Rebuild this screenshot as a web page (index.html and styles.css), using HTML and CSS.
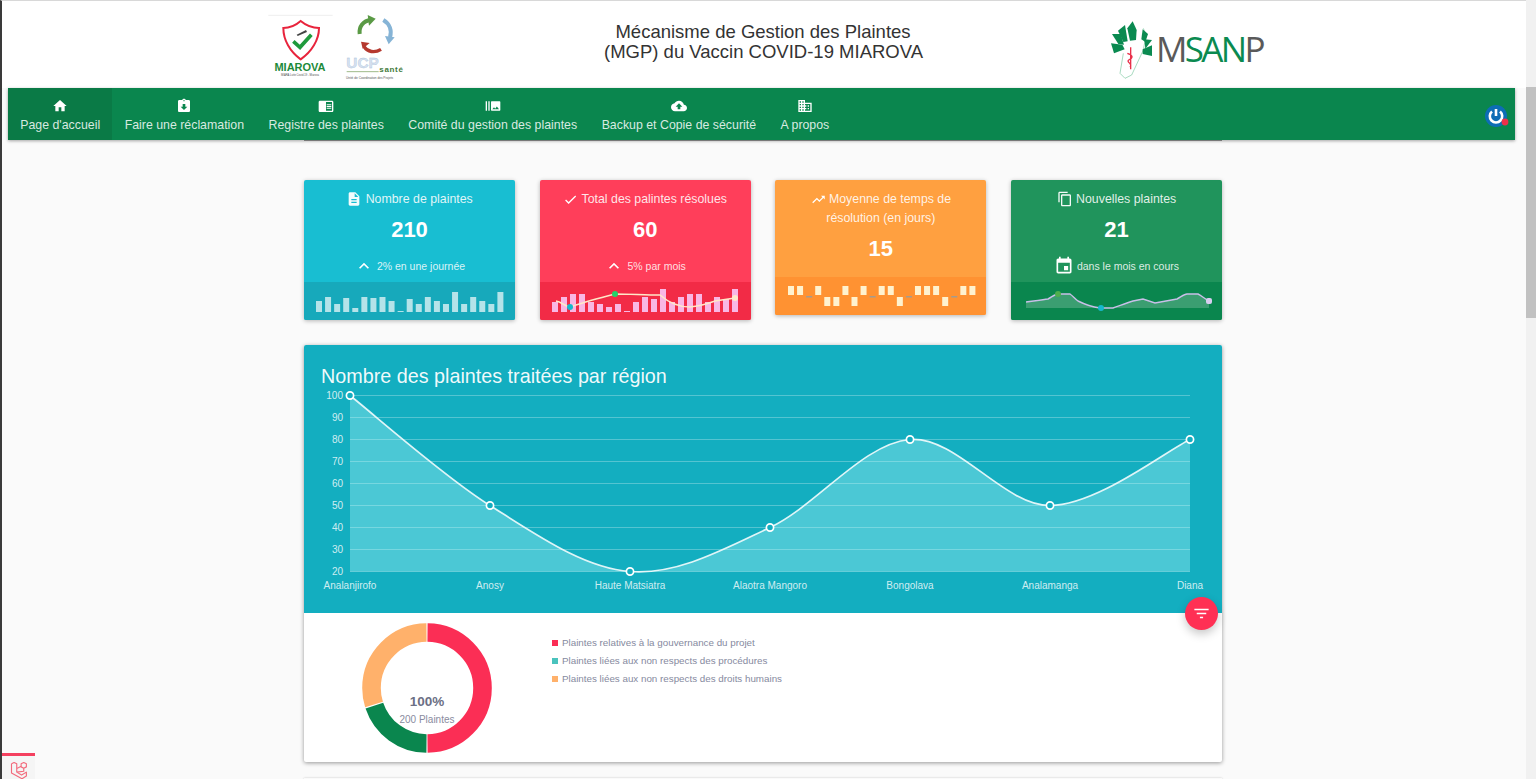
FILE: index.html
```html
<!DOCTYPE html>
<html lang="en">
<head>
    <meta charset="UTF-8">
    <meta name="viewport" content="width=device-width, initial-scale=1.0">
    <title>MGP MIAROVA</title>
    <link rel="stylesheet" href="styles.css">
</head>
<body>
    <div class="window-edge"></div>

    <header class="top-header">
        <svg class="logo-left" viewBox="0 0 540 261">
            <line x1="55" y1="46" x2="248" y2="46" stroke="#eee" stroke-width="3"/>
            <path d="M152 63C135 78 118 84 100 84C100 120 120 155 152 178C185 155 207 120 207 84C188 84 170 78 152 63Z" fill="#fff" stroke="#e8243c" stroke-width="6"/>
            <path d="M130 124l20 18 34-38" fill="none" stroke="#1f9a3c" stroke-width="11"/>
            <path d="M140 104l28-14 3 6-28 12z" fill="#444"/>
            <text x="150" y="213" class="logo-miarova">MIAROVA</text>
            <text x="150" y="227" class="logo-tiny logo-tiny-mid">MIARA Lutte Covid-19 - Miarova</text>
            <path d="M329 102C326 80 340 62 362 60" fill="none" stroke="#5a9a45" stroke-width="12"/>
            <path d="M353 45l24 11-20 21z" fill="#5a9a45"/>
            <path d="M400 60C420 72 426 92 420 112" fill="none" stroke="#86b4d6" stroke-width="12"/>
            <path d="M405 108l29 4-18 21z" fill="#86b4d6"/>
            <path d="M393 148C374 160 352 156 342 140" fill="none" stroke="#b5392f" stroke-width="10"/>
            <path d="M333 125l26 4-21 17z" fill="#b5392f"/>
            <text x="289" y="205" class="logo-ucp">UCP</text>
            <line x1="290" y1="215" x2="386" y2="215" stroke="#9fbb8a" stroke-width="3"/>
            <text x="388" y="216" class="logo-sante">santé</text>
            <text x="288" y="238" class="logo-tiny">Unité de Coordination des Projets</text>
        </svg>
        <h1 class="top-title">Mécanisme de Gestion des Plaintes<br>(MGP) du Vaccin COVID-19 MIAROVA</h1>
        <svg class="logo-right" viewBox="0 0 570 231">
            <path d="M160 55L168 75L160 120L125 195L105 205L90 190L100 130" fill="none" stroke="#7cc7a0" stroke-width="2"/>
            <g fill="#0a8a50">
                <path d="M112 55L128 34L140 60L138 90L120 92z"/>
                <path d="M84 62L105 45L113 94L100 96z"/>
                <path d="M66 72L92 72L102 104L85 102z"/>
                <path d="M63 100L97 104L104 118L72 130z"/>
                <path d="M158 58L174 72L166 96L154 88z"/>
                <path d="M163 88L186 90L166 116z"/>
                <path d="M158 118L186 106L186 138L158 132z"/>
            </g>
            <path d="M122 112V178M112 130C130 136 130 144 116 150C108 156 130 162 120 172" fill="none" stroke="#e8304a" stroke-width="4"/>
            <text x="198" y="155" class="logo-msanp"><tspan fill="#5a5a5a">M</tspan><tspan fill="#0a8a50">SAN</tspan><tspan fill="#5a5a5a">P</tspan></text>
        </svg>
    </header>

    <nav class="main-nav">
        <a class="nav-item active">
            <svg viewBox="0 0 24 24"><path d="M10 20v-6h4v6h5v-8h3L12 3 2 12h3v8z"/></svg>
            <span>Page d'accueil</span>
        </a>
        <a class="nav-item">
            <svg viewBox="0 0 24 24"><path d="M19 3h-4.18C14.4 1.84 13.3 1 12 1c-1.3 0-2.4.84-2.82 2H5c-1.1 0-2 .9-2 2v14c0 1.1.9 2 2 2h14c1.1 0 2-.9 2-2V5c0-1.1-.9-2-2-2zm-7 0c.55 0 1 .45 1 1s-.45 1-1 1-1-.45-1-1 .45-1 1-1zm0 15l-5-5h3V9h4v4h3l-5 5z"/></svg>
            <span>Faire une réclamation</span>
        </a>
        <a class="nav-item">
            <svg viewBox="0 0 24 24"><path d="M13 12h7v1.5h-7zm0-2.5h7V11h-7zm0 5h7V16h-7zM21 4H3c-1.1 0-2 .9-2 2v13c0 1.1.9 2 2 2h18c1.1 0 2-.9 2-2V6c0-1.1-.9-2-2-2zm0 15h-9V6h9v13z"/></svg>
            <span>Registre des plaintes</span>
        </a>
        <a class="nav-item">
            <svg viewBox="0 0 24 24"><path d="M1 5h2v14H1zm4 0h2v14H5zm17 0H10c-.55 0-1 .45-1 1v12c0 .55.45 1 1 1h12c.55 0 1-.45 1-1V6c0-.55-.45-1-1-1zM11 17l2.5-3.15L15.29 16l2.5-3.22L21 17H11z"/></svg>
            <span>Comité du gestion des plaintes</span>
        </a>
        <a class="nav-item">
            <svg viewBox="0 0 24 24"><path d="M19.35 10.04C18.67 6.59 15.64 4 12 4 9.11 4 6.6 5.64 5.35 8.04 2.34 8.36 0 10.91 0 14c0 3.31 2.69 6 6 6h13c2.76 0 5-2.24 5-5 0-2.64-2.05-4.78-4.65-4.96zM14 13v4h-4v-4H7l5-5 5 5h-3z"/></svg>
            <span>Backup et Copie de sécurité</span>
        </a>
        <a class="nav-item">
            <svg viewBox="0 0 24 24"><path d="M12 7V3H2v18h20V7H12zM6 19H4v-2h2v2zm0-4H4v-2h2v2zm0-4H4V9h2v2zm0-4H4V5h2v2zm4 12H8v-2h2v2zm0-4H8v-2h2v2zm0-4H8V9h2v2zm0-4H8V5h2v2zm10 12h-8v-2h2v-2h-2v-2h2v-2h-2V9h8v10zm-2-8h-2v2h2v-2zm0 4h-2v2h2v-2z"/></svg>
            <span>A propos</span>
        </a>
        <svg class="power-btn" viewBox="0 0 26 26">
            <circle cx="12" cy="12" r="11" fill="#0d6db5"/>
            <path d="M8 7.5A6.2 6.2 0 1 0 16 7.5" fill="none" stroke="#fff" stroke-width="2.6"/>
            <line x1="12" y1="5" x2="12" y2="12" stroke="#fff" stroke-width="2.6"/>
            <circle cx="21" cy="18" r="3.4" fill="#f0304a"/>
        </svg>
    </nav>

    <main class="content">
        <div class="prev-card"></div>

        <section class="stats">
            <div class="stat-card stat-teal">
                <div class="stat-body">
                    <div class="stat-title">
                        <svg class="title-big" viewBox="0 0 24 24"><path d="M14 2H6c-1.1 0-1.99.9-1.99 2L4 20c0 1.1.89 2 1.99 2H18c1.1 0 2-.9 2-2V8l-6-6zm2 16H8v-2h8v2zm0-4H8v-2h8v2zm-3-5V3.5L18.5 9H13z"/></svg>
                        Nombre de plaintes
                    </div>
                    <div class="stat-value">210</div>
                    <div class="stat-sub">
                        <svg class="sub-arrow" viewBox="0 0 24 24"><path d="M12 8l-6 6 1.41 1.41L12 10.83l4.59 4.58L18 14z"/></svg>
                        2% en une journée
                    </div>
                </div>
                <svg class="stat-spark" viewBox="0 0 211 38" id="spark-teal"></svg>
            </div>

            <div class="stat-card stat-red">
                <div class="stat-body">
                    <div class="stat-title">
                        <svg viewBox="0 0 24 24"><path d="M9 16.17L4.83 12l-1.42 1.41L9 19 21 7l-1.41-1.41z"/></svg>
                        Total des palintes résolues
                    </div>
                    <div class="stat-value">60</div>
                    <div class="stat-sub">
                        <svg class="sub-arrow" viewBox="0 0 24 24"><path d="M12 8l-6 6 1.41 1.41L12 10.83l4.59 4.58L18 14z"/></svg>
                        5% par mois
                    </div>
                </div>
                <svg class="stat-spark" viewBox="0 0 211 38">
                    <g fill="#f9b7e4">
                        <rect x="12" y="20" width="6" height="10"/><rect x="21" y="15" width="6" height="15"/><rect x="30" y="12" width="6" height="18"/><rect x="39" y="12" width="6" height="18"/><rect x="48" y="20" width="6" height="10"/><rect x="57" y="22" width="6" height="8"/><rect x="66" y="25" width="6" height="5"/><rect x="75" y="22" width="6" height="8"/><rect x="84" y="29" width="6" height="1"/><rect x="93" y="20" width="6" height="10"/><rect x="102" y="15" width="6" height="15"/><rect x="111" y="17" width="6" height="13"/><rect x="120" y="7" width="6" height="23"/><rect x="129" y="20" width="6" height="10"/><rect x="138" y="15" width="6" height="15"/><rect x="147" y="12" width="6" height="18"/><rect x="156" y="12" width="6" height="18"/><rect x="165" y="20" width="6" height="10"/><rect x="174" y="15" width="6" height="15"/><rect x="183" y="17" width="6" height="13"/><rect x="192" y="7" width="6" height="23"/>
                    </g>
                    <path d="M16 19C22 20 24 24 30 25C44 20 60 16 75 12C90 12 105 13 120 13C128 20 138 25 150 25C162 24 172 20 175 19L195 16" fill="none" stroke="#ffe8c8" stroke-width="1.5"/>
                    <circle cx="30" cy="25" r="3" fill="#16b8cc"/>
                    <circle cx="75" cy="12" r="3" fill="#1fd36a"/>
                    <circle cx="195" cy="16" r="3" fill="#ffeacb"/>
                </svg>
            </div>

            <div class="stat-card stat-orange">
                <div class="stat-body stat-body-nosub">
                    <div class="stat-title">
                        <svg viewBox="0 0 24 24"><path d="M16 6l2.29 2.29-4.88 4.88-4-4L2 16.59 3.41 18l6-6 4 4 6.3-6.29L22 12V6z"/></svg>
                        Moyenne de temps de résolution (en jours)
                    </div>
                    <div class="stat-value">15</div>
                </div>
                <svg class="stat-spark" viewBox="0 0 211 38" id="spark-orange"></svg>
            </div>

            <div class="stat-card stat-green">
                <div class="stat-body">
                    <div class="stat-title">
                        <svg viewBox="0 0 24 24" class="title-big"><path d="M16 1H4c-1.1 0-2 .9-2 2v14h2V3h12V1zm3 4H8c-1.1 0-2 .9-2 2v14c0 1.1.9 2 2 2h11c1.1 0 2-.9 2-2V7c0-1.1-.9-2-2-2zm0 16H8V7h11v14z"/></svg>
                        Nouvelles plaintes
                    </div>
                    <div class="stat-value">21</div>
                    <div class="stat-sub">
                        <svg class="sub-event" viewBox="0 0 24 24"><path d="M17 12h-5v5h5v-5zM16 1v2H8V1H6v2H5c-1.11 0-1.99.9-1.99 2L3 19c0 1.1.89 2 2 2h14c1.1 0 2-.9 2-2V5c0-1.1-.9-2-2-2h-1V1h-2zm3 18H5V8h14v11z"/></svg>
                        dans le mois en cours
                    </div>
                </div>
                <svg class="stat-spark" viewBox="0 0 211 38">
                    <path d="M15 20C24 19 30 18 37 17C41 15 44 12 47 12H59C62 14 64 17 67 19C75 23 82 25 89 26H102C108 24 115 21 122 19L132 17L144 21L166 17C170 15 173 12 176 12H187C191 14 194 17 198 19V26H15z" fill="rgba(255,255,255,0.2)"/>
                    <path d="M15 20C24 19 30 18 37 17C41 15 44 12 47 12H59C62 14 64 17 67 19C75 23 82 25 89 26H102C108 24 115 21 122 19L132 17L144 21L166 17C170 15 173 12 176 12H187C191 14 194 17 198 19" fill="none" stroke="#c9bfe8" stroke-width="1.4"/>
                    <circle cx="47" cy="12" r="3" fill="#4fae4e"/>
                    <circle cx="90" cy="26" r="3" fill="#16b8cc"/>
                    <rect x="195" y="16" width="6" height="6" rx="2" fill="#d7cdf0"/>
                </svg>
            </div>
        </section>

        <section class="chart-card">
            <div class="chart-head">
                <h2 class="chart-title">Nombre des plaintes traitées par région</h2>
                <svg class="line-chart" viewBox="304 387.5 918 225" id="line-chart">
                    <path class="area" d="M350 395C373.3 413.3 443.3 475.7 490 505C536.7 534.3 583.3 567.3 630 571C676.7 574.7 723.3 549 770 527C816.7 505 863.3 442.7 910 439C956.7 435.3 1003.3 505 1050 505C1096.7 505 1166.7 450 1190 439V571H350Z"/>
                    <path class="curve" d="M350 395C373.3 413.3 443.3 475.7 490 505C536.7 534.3 583.3 567.3 630 571C676.7 574.7 723.3 549 770 527C816.7 505 863.3 442.7 910 439C956.7 435.3 1003.3 505 1050 505C1096.7 505 1166.7 450 1190 439"/>
                </svg>
                <button class="fab">
                    <svg viewBox="0 0 24 24"><path d="M10 18h4v-2h-4v2zM3 6v2h18V6H3zm3 7h12v-2H6v2z"/></svg>
                </button>
            </div>
            <div class="chart-foot">
                <div class="donut">
                    <svg viewBox="0 0 130 130">
                        <g fill="none" stroke-width="18.6" transform="rotate(-90 65 65)">
                            <circle cx="65" cy="65" r="55.5" pathLength="100" stroke="#fb2e55" stroke-dasharray="49.7 50.3" stroke-dashoffset="-0.15"/>
                            <circle cx="65" cy="65" r="55.5" pathLength="100" stroke="#0a864e" stroke-dasharray="19.7 80.3" stroke-dashoffset="-50.15"/>
                            <circle cx="65" cy="65" r="55.5" pathLength="100" stroke="#ffb16b" stroke-dasharray="29.7 70.3" stroke-dashoffset="-70.15"/>
                        </g>
                    </svg>
                    <div class="donut-pct">100%</div>
                    <div class="donut-total">200 Plaintes</div>
                </div>
                <ul class="legend">
                    <li><i class="dot-red"></i>Plaintes relatives à la gouvernance du projet</li>
                    <li><i class="dot-teal"></i>Plaintes liées aux non respects des procédures</li>
                    <li><i class="dot-orange"></i>Plaintes liées aux non respects des droits humains</li>
                </ul>
            </div>
        </section>

        <div class="next-card"></div>
    </main>

    <div class="debug-tab">
        <svg viewBox="0 0 24 24"><path d="M4 5.5L7 4l3 1.500V15l6 3.500M4 5.500V16l12 6.500 5-3V15l-5 3M10 11l5-2.800M15 5.500L18 4l3 1.500V9l-3 1.500L15 9zM18 10.500V14l-8 1" fill="none" stroke="#f26a7c" stroke-width="1.300" stroke-linejoin="round"/></svg>
    </div>
    <div class="fake-scrollbar"><div class="fake-thumb"></div></div>

    <script src="charts.js"></script>
</body>
</html>
```

FILE: styles.css
```css
* {
    box-sizing: border-box;
}

html, body {
    height: 100%;
}

body {
    font-family: "Liberation Sans", Arial, sans-serif;
    margin: 0;
    background-color: #fafafa;
    overflow: hidden;
}

.window-edge {
    position: fixed;
    left: 0;
    top: 0;
    width: 100%;
    height: 100%;
    border-left: 2px solid #3a3a3a;
    border-top: 1px solid #d8d8d8;
    pointer-events: none;
    z-index: 5;
}

/* header */
.top-header {
    height: 88px;
    background-color: #fff;
    display: flex;
    align-items: flex-start;
    padding-left: 250px;
}

.logo-left {
    width: 180px;
    height: 87px;
    flex: none;
}

.top-title {
    margin: 22px 0 0 174px;
    width: 318px;
    flex: none;
    font-size: 18.5px;
    font-weight: 400;
    line-height: 20px;
    text-align: center;
    white-space: nowrap;
    color: #333;
}

.logo-right {
    width: 190px;
    height: 77px;
    margin: 10px 0 0 168px;
    flex: none;
}

.logo-miarova { font: 700 33px "Liberation Sans", sans-serif; fill: #1d8a3a; text-anchor: middle; }
.logo-tiny { font: 400 9.5px "Liberation Sans", sans-serif; fill: #555; }
.logo-tiny-mid { font-size: 8px; text-anchor: middle; }
.logo-ucp { font: 700 46px "Liberation Sans", sans-serif; fill: #d7e2f0; stroke: #a9bfd8; stroke-width: 1; }
.logo-sante { font: 700 24px "Liberation Sans", sans-serif; fill: #3f7a3a; letter-spacing: 2px; }
.logo-msanp { font: 400 105px "Open Sans", sans-serif; letter-spacing: -8px; }

/* nav */
.main-nav {
    height: 52px;
    margin: 0 21px 0 8px;
    background-color: #0a864e;
    display: flex;
    position: relative;
    z-index: 2;
    box-shadow: 0 1px 3px rgba(0, 0, 0, 0.35);
}

.nav-item {
    display: flex;
    flex-direction: column;
    align-items: center;
    padding: 10px 12.25px 0;
    color: rgba(255, 255, 255, 0.85);
    font-size: 12.35px;
    line-height: 18px;
}

.nav-item svg {
    width: 16px;
    height: 16px;
    fill: #fff;
    margin-bottom: 2px;
}

.nav-item.active {
    background-color: #0a7a46;
}

.power-btn {
    position: absolute;
    right: 5px;
    top: 16px;
    width: 26px;
    height: 26px;
}

/* content */
.content {
    width: 918px;
    margin-left: 304px;
}

.prev-card {
    height: 1px;
    margin-bottom: 39px;
    background-color: #9a9a9a;
}

.stats {
    display: grid;
    grid-template-columns: repeat(4, 211px);
    column-gap: 24.67px;
    align-items: start;
}

.stat-card {
    color: #fff;
    border-radius: 2px;
    overflow: hidden;
    box-shadow: 0 1px 4px rgba(0, 0, 0, 0.28);
}

.stat-teal { background-color: #18bed2; }
.stat-red { background-color: #ff3e5a; }
.stat-orange { background-color: #ffa040; }
.stat-green { background-color: #20945c; }

.stat-body {
    padding: 10px 10px 6px;
    text-align: center;
}

.stat-body-nosub {
    padding-bottom: 16px;
}

.stat-title {
    font-size: 12.35px;
    line-height: 19px;
    color: rgba(255, 255, 255, 0.88);
}

/* negative margins so an icon never makes the text line taller */
.stat-title svg {
    width: 15px;
    height: 15px;
    margin: -4px 0;
    fill: #fff;
    vertical-align: 0;
}

.stat-title svg.title-big {
    width: 16px;
    height: 16px;
    fill: rgba(255, 255, 255, 0.95);
}

.stat-value {
    margin-top: 9px;
    font-size: 22px;
    font-weight: 700;
    line-height: 24px;
}

.stat-sub {
    margin-top: 14px;
    height: 20px;
    display: flex;
    justify-content: center;
    align-items: center;
    font-size: 10.5px;
    color: rgba(255, 255, 255, 0.85);
}

.sub-arrow {
    width: 20px;
    height: 20px;
    fill: #fff;
    margin-right: 3px;
}

.sub-event {
    width: 20px;
    height: 20px;
    fill: #fff;
    margin-right: 3px;
}

.stat-spark {
    display: block;
    width: 211px;
    height: 38px;
}

.stat-teal .stat-spark { background-color: #17a9bb; }
.stat-red .stat-spark { background-color: #f22b46; }
.stat-orange .stat-spark { background-color: #ff9232; }
.stat-green .stat-spark { background-color: #0a864e; }

/* big chart */
.chart-card {
    margin-top: 25px;
    background-color: #fff;
    border-radius: 2px;
    box-shadow: 0 1px 4px rgba(0, 0, 0, 0.4);
}

.chart-head {
    position: relative;
    height: 268px;
    padding-top: 19px;
    background-color: #13aec0;
    border-radius: 2px 2px 0 0;
}

.chart-title {
    margin: 0 0 0 17px;
    font-size: 19.75px;
    font-weight: 400;
    line-height: 24px;
    color: rgba(255, 255, 255, 0.95);
}

.line-chart {
    display: block;
    width: 918px;
    height: 225px;
}

.grid-line { stroke: rgba(255, 255, 255, 0.28); stroke-width: 1; }
.area { fill: rgba(190, 255, 255, 0.33); }
.curve { fill: none; stroke: rgba(255, 255, 255, 0.85); stroke-width: 1.7; }
.point { fill: #13aec0; stroke: #fff; stroke-width: 1.7; }
.axis-label { font-size: 10px; fill: rgba(255, 255, 255, 0.8); }

.fab {
    position: absolute;
    right: 4px;
    bottom: -17px;
    width: 33px;
    height: 33px;
    padding: 7px;
    border: none;
    border-radius: 50%;
    background-color: #ff3054;
    box-shadow: 0 4px 10px rgba(0, 0, 0, 0.22);
}

.fab svg {
    display: block;
    width: 19px;
    height: 19px;
    fill: #fff;
}

.chart-foot {
    height: 149px;
    display: flex;
    padding: 10px 0 0 58px;
}

.donut {
    position: relative;
    width: 130px;
    height: 130px;
    flex: none;
    text-align: center;
}

.donut svg {
    display: block;
}

.donut-pct {
    position: absolute;
    left: 0;
    right: 0;
    top: 70px;
    font-size: 13.5px;
    font-weight: 700;
    line-height: 18px;
    color: #6c6f85;
}

.donut-total {
    position: absolute;
    left: 0;
    right: 0;
    top: 90px;
    font-size: 10px;
    line-height: 14px;
    color: #8a8ca0;
}

.legend {
    list-style: none;
    margin: 11px 0 0 60px;
    padding: 0;
    font-size: 9.8px;
    line-height: 18px;
    color: #868aa0;
}

.legend li {
    display: flex;
    align-items: center;
}

.legend i {
    width: 6px;
    height: 6px;
    margin-right: 4px;
}

.dot-red { background-color: #fb2e55; }
.dot-teal { background-color: #4ac3bd; }
.dot-orange { background-color: #ffb16b; }

.next-card {
    height: 20px;
    margin-top: 16px;
    background-color: #fafafa;
    box-shadow: 0 0 2px rgba(0, 0, 0, 0.2);
}

/* things drawn over the page */
.debug-tab {
    position: fixed;
    left: 2px;
    bottom: 0;
    width: 33px;
    height: 26px;
    background-color: #f5f5f5;
    border-top: 3px solid #f4405f;
    padding: 3px 0 0 6px;
    z-index: 6;
}

.debug-tab svg {
    display: block;
    width: 21px;
    height: 21px;
}

.fake-scrollbar {
    position: fixed;
    top: 0;
    right: 0;
    width: 10px;
    height: 100%;
    background-color: #f1f1f1;
    z-index: 6;
}

.fake-thumb {
    margin-top: 87px;
    height: 231px;
    background-color: #c1c1c1;
}
```

FILE: charts.js
```js
const NS = 'http://www.w3.org/2000/svg';

function el(parent, name, attrs, text) {
    const node = document.createElementNS(NS, name);
    Object.keys(attrs).forEach(k => node.setAttribute(k, attrs[k]));
    if (text) node.textContent = text;
    parent.appendChild(node);
    return node;
}

// teal card bars
const tealHeights = [11, 15, 8, 14, 4, 15, 14, 15, 11, 1, 13, 8, 15, 11, 8, 20, 8, 15, 11, 8, 20];
const teal = document.getElementById('spark-teal');
tealHeights.forEach((h, i) => {
    el(teal, 'rect', { x: 12 + i * 9.07, y: 30 - h, width: 6, height: h, fill: 'rgba(255,255,255,0.68)' });
});

// orange card: 1 up, -1 down, 0 flat
const pattern = [1, 1, 0, 1, -1, -1, 1, -1, 1, 0, 1, 1, -1, 0, 1, 1, 1, -1, 0, 1, 1];
const orange = document.getElementById('spark-orange');
pattern.forEach((p, i) => {
    const x = 13 + i * 9.07;
    if (p === 1) el(orange, 'rect', { x: x, y: 9, width: 6, height: 9, fill: '#fff2cf' });
    if (p === -1) el(orange, 'rect', { x: x, y: 20, width: 6, height: 9, fill: '#fff2cf' });
    if (p === 0) el(orange, 'rect', { x: x, y: 19, width: 6, height: 1.5, fill: '#a39b90' });
});

// region chart
const chart = document.getElementById('line-chart');
const area = chart.querySelector('.area');
for (let v = 100; v >= 20; v -= 10) {
    const y = 395 + (100 - v) * 2.2;
    const line = el(chart, 'line', { class: 'grid-line', x1: 350, x2: 1190, y1: y, y2: y });
    chart.insertBefore(line, area);
    el(chart, 'text', { class: 'axis-label', x: 343, y: y + 3.5, 'text-anchor': 'end' }, String(v));
}

const regions = [
    ['Analanjirofo', 100], ['Anosy', 50], ['Haute Matsiatra', 20], ['Alaotra Mangoro', 40],
    ['Bongolava', 80], ['Analamanga', 50], ['Diana', 80]
];
regions.forEach((r, i) => {
    const x = 350 + i * 140;
    el(chart, 'circle', { class: 'point', cx: x, cy: 395 + (100 - r[1]) * 2.2, r: 3.6 });
    el(chart, 'text', { class: 'axis-label', x: x, y: 588, 'text-anchor': 'middle' }, r[0]);
});
```
